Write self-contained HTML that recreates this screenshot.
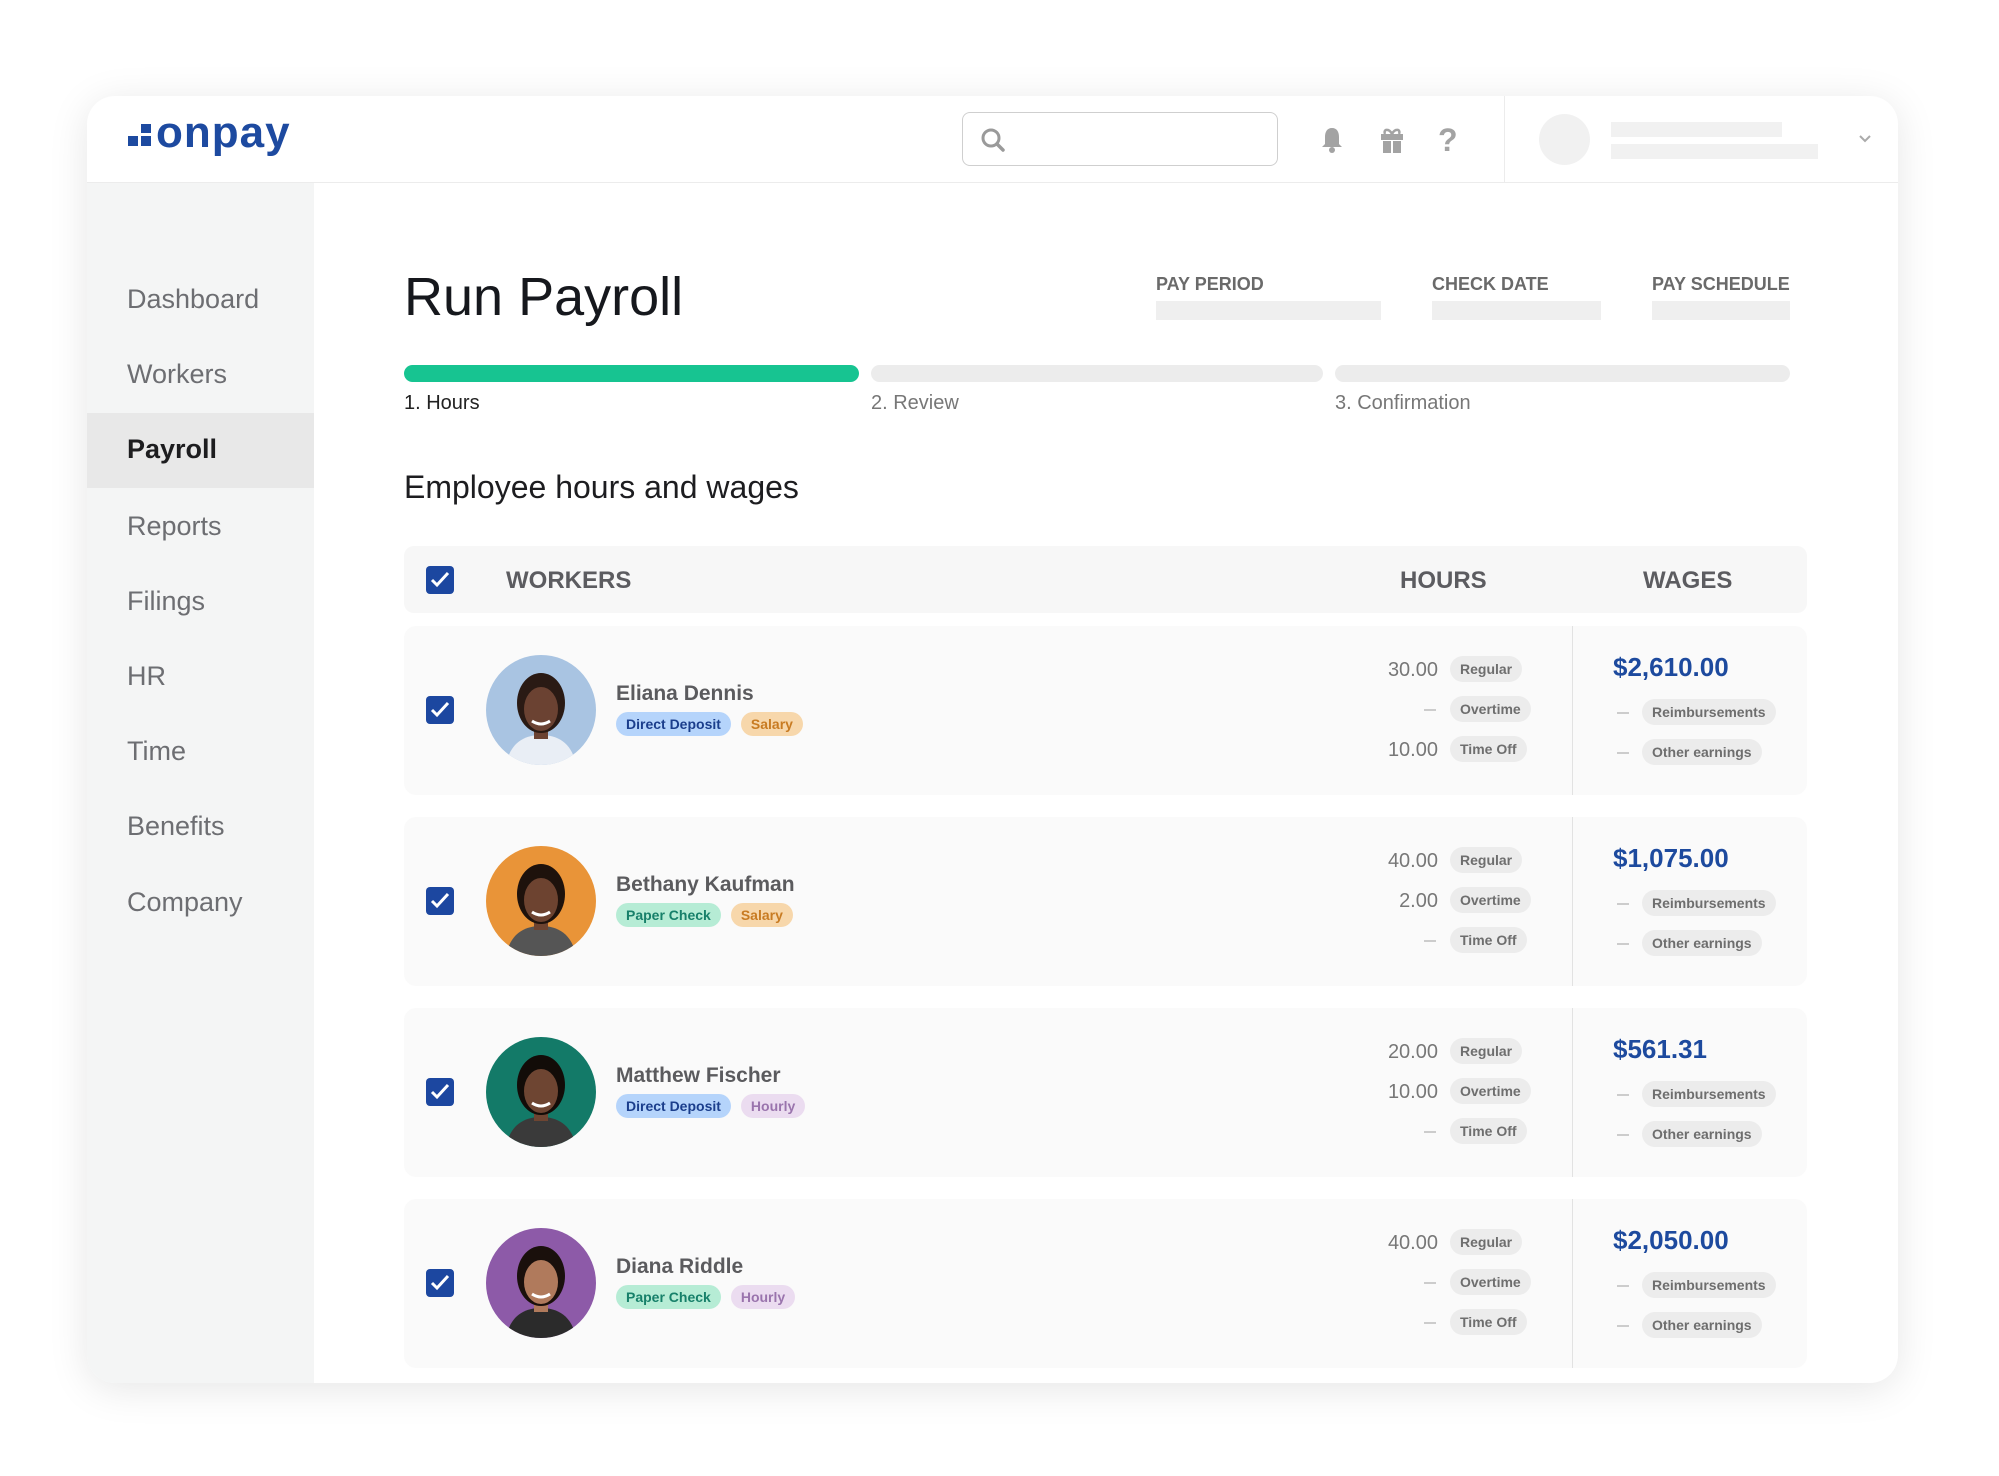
<!DOCTYPE html>
<html><head><meta charset="utf-8"><style>
*{margin:0;padding:0;box-sizing:border-box}
body{width:1999px;height:1476px;background:#fff;font-family:"Liberation Sans",sans-serif;position:relative;overflow:hidden}
.a{position:absolute}
.card{left:87px;top:96px;width:1811px;height:1287px;background:#fff;border-radius:28px;box-shadow:0 6px 40px rgba(0,0,0,.10);overflow:hidden}
.nav{left:127px;font-size:27px;color:#6d6e72}
.lbl{font-size:18px;font-weight:bold;color:#6a6a6a}
.bar{height:19px;background:#efefef}
.prog{top:365px;height:17px;border-radius:9px;background:#ececec}
.row{left:404px;width:1403px;height:169px;background:#fafafa;border-radius:12px}
.cb{width:28px;height:28px;background:#1c47a0;border-radius:4px}
.cb svg{position:absolute;left:4px;top:5px}
.name{font-size:21px;color:#5b5b5e;font-weight:bold}
.badge{height:24px;line-height:24px;padding:0 10px;border-radius:12px;font-size:14px;font-weight:bold;display:inline-block;margin-right:10px}
.dd{background:#b5d4fb;color:#1b3e8c}.pc{background:#b6ecd5;color:#17806a}.sa{background:#f7d7ab;color:#c87b22}.ho{background:#ebdcf0;color:#9a74ad}
.num{font-size:20px;color:#777;text-align:right;width:100px}
.pill{height:26px;line-height:26px;padding:0 10px;border-radius:13px;background:#ececec;font-size:14px;font-weight:bold;color:#6e6e6e}
.dash{width:12px;height:2px;background:#ccc}
.wage{font-size:26px;font-weight:bold;color:#1d4a9e}
.av{width:110px;height:110px;border-radius:50%;overflow:hidden}
</style></head><body>
<div class="a card">
 <div class="a" style="left:0;top:86px;width:1811px;height:1px;background:#ececec"></div>
 <div class="a" style="left:0;top:87px;width:227px;height:1200px;background:#f4f5f5"></div>
 <div class="a" style="left:0;top:317px;width:227px;height:75px;background:#e8e8e8"></div>
 <div class="a" style="left:1417px;top:0;width:1px;height:86px;background:#ececec"></div>
</div>
<!-- logo -->
<div class="a" style="left:128px;top:136px;width:10px;height:10px;background:#1d4aa0"></div>
<div class="a" style="left:141px;top:136px;width:10px;height:10px;background:#1d4aa0"></div>
<div class="a" style="left:141px;top:124px;width:10px;height:9px;background:#1d4aa0"></div>
<div class="a" style="left:156px;top:108px;font-size:44px;font-weight:bold;color:#1d4aa0;letter-spacing:1px">onpay</div>
<!-- search -->
<div class="a" style="left:962px;top:112px;width:316px;height:54px;border:1.5px solid #cfcfcf;border-radius:8px"></div>
<svg class="a" style="left:980px;top:127px" width="26" height="26" viewBox="0 0 26 26"><circle cx="11" cy="11" r="8" fill="none" stroke="#9a9a9a" stroke-width="3"/><line x1="17" y1="17" x2="23" y2="23" stroke="#9a9a9a" stroke-width="3.5" stroke-linecap="round"/></svg>
<svg class="a" style="left:1320px;top:126px" width="24" height="28" viewBox="0 0 24 28"><path d="M12 2c-5 0-7 4-7 9v7l-3 3h20l-3-3v-7c0-5-2-9-7-9z" fill="#a3a3a3"/><circle cx="12" cy="24" r="3" fill="#a3a3a3"/></svg>
<svg class="a" style="left:1379px;top:126px" width="26" height="28" viewBox="0 0 26 28"><rect x="2" y="8" width="22" height="6" fill="#a3a3a3"/><rect x="4" y="15" width="8" height="12" fill="#a3a3a3"/><rect x="14" y="15" width="8" height="12" fill="#a3a3a3"/><path d="M13 8c-3-6-9-5-7 0M13 8c3-6 9-5 7 0" fill="none" stroke="#a3a3a3" stroke-width="2.5"/></svg>
<div class="a" style="left:1438px;top:122px;font-size:32px;font-weight:bold;color:#a3a3a3">?</div>
<div class="a" style="left:1539px;top:114px;width:51px;height:51px;border-radius:50%;background:#f1f1f1"></div>
<div class="a" style="left:1611px;top:122px;width:171px;height:15px;background:#f1f1f1"></div>
<div class="a" style="left:1611px;top:144px;width:207px;height:15px;background:#f1f1f1"></div>
<svg class="a" style="left:1858px;top:134px" width="14" height="10" viewBox="0 0 14 10"><path d="M2 2l5 5 5-5" fill="none" stroke="#aaa" stroke-width="2"/></svg>
<!-- nav -->
<div class="a nav" style="top:284px">Dashboard</div>
<div class="a nav" style="top:359px">Workers</div>
<div class="a nav" style="top:434px;color:#1d1d1f;font-weight:bold">Payroll</div>
<div class="a nav" style="top:511px">Reports</div>
<div class="a nav" style="top:586px">Filings</div>
<div class="a nav" style="top:661px">HR</div>
<div class="a nav" style="top:736px">Time</div>
<div class="a nav" style="top:811px">Benefits</div>
<div class="a nav" style="top:887px">Company</div>
<!-- title -->
<div class="a" style="left:404px;top:266px;font-size:54px;color:#16181d">Run Payroll</div>
<div class="a lbl" style="left:1156px;top:274px">PAY PERIOD</div>
<div class="a bar" style="left:1156px;top:301px;width:225px"></div>
<div class="a lbl" style="left:1432px;top:274px">CHECK DATE</div>
<div class="a bar" style="left:1432px;top:301px;width:169px"></div>
<div class="a lbl" style="left:1652px;top:274px">PAY SCHEDULE</div>
<div class="a bar" style="left:1652px;top:301px;width:138px"></div>
<div class="a prog" style="left:404px;width:455px;background:#17c491"></div>
<div class="a prog" style="left:871px;width:452px"></div>
<div class="a prog" style="left:1335px;width:455px"></div>
<div class="a" style="left:404px;top:392px;font-size:20px;color:#222">1. Hours</div>
<div class="a" style="left:871px;top:392px;font-size:20px;color:#777">2. Review</div>
<div class="a" style="left:1335px;top:392px;font-size:20px;color:#777">3. Confirmation</div>
<div class="a" style="left:404px;top:469px;font-size:32px;color:#1d1d20">Employee hours and wages</div>
<!-- table header -->
<div class="a" style="left:404px;top:546px;width:1403px;height:67px;background:#f7f7f7;border-radius:10px"></div>
<div class="a cb" style="left:426px;top:566px"><svg width="20" height="18" viewBox="0 0 20 18"><path d="M2 9l5 5 11-12" fill="none" stroke="#fff" stroke-width="3"/></svg></div>
<div class="a" style="left:506px;top:567px;font-size:24px;font-weight:bold;color:#5c5c60">WORKERS</div>
<div class="a" style="left:1400px;top:567px;font-size:24px;font-weight:bold;color:#5c5c60">HOURS</div>
<div class="a" style="left:1643px;top:567px;font-size:24px;font-weight:bold;color:#5c5c60">WAGES</div>

<div id="rows"></div>
<script>
var data=[
["Eliana Dennis","dd","Direct Deposit","sa","Salary",["30.00","","10.00"],"$2,610.00","#a9c4e2","#2a1a14","#6b4232","#e9eef5"],
["Bethany Kaufman","pc","Paper Check","sa","Salary",["40.00","2.00",""],"$1,075.00","#e99438","#1e120c","#6d4330","#555"],
["Matthew Fischer","dd","Direct Deposit","ho","Hourly",["20.00","10.00",""],"$561.31","#137a68","#120c08","#6e4532","#3a3a3a"],
["Diana Riddle","pc","Paper Check","ho","Hourly",["40.00","",""],"$2,050.00","#8d5aa8","#1a100c","#b07a5c","#2b2b2b"]];
var h="";
data.forEach(function(d,i){
var t=626+i*191;
h+='<div class="a row" style="top:'+t+'px"></div>';
h+='<div class="a" style="left:1572px;top:'+t+'px;width:1px;height:169px;background:#e2e2e2"></div>';
h+='<div class="a cb" style="left:426px;top:'+(t+70)+'px"><svg width="20" height="18" viewBox="0 0 20 18"><path d="M2 9l5 5 11-12" fill="none" stroke="#fff" stroke-width="3"/></svg></div>';
h+='<div class="a av" style="left:486px;top:'+(t+29)+'px;background:'+d[7]+'"><svg width="110" height="110" viewBox="0 0 110 110"><path d="M20 110c4-22 18-30 35-30s31 8 35 30z" fill="'+d[10]+'"/><rect x="48" y="66" width="14" height="18" fill="'+d[9]+'"/><ellipse cx="55" cy="48" rx="24" ry="30" fill="'+d[8]+'"/><ellipse cx="55" cy="54" rx="17" ry="22" fill="'+d[9]+'"/><path d="M46 66q9 6 18 0" stroke="#fff" stroke-width="3" fill="none"/></svg></div>';
h+='<div class="a name" style="left:616px;top:'+(t+56)+'px">'+d[0]+'</div>';
h+='<div class="a" style="left:616px;top:'+(t+86)+'px;white-space:nowrap"><span class="badge '+d[1]+'">'+d[2]+'</span><span class="badge '+d[3]+'">'+d[4]+'</span></div>';
var lab=["Regular","Overtime","Time Off"];
for(var k=0;k<3;k++){var y=t+43+k*40;
 if(d[5][k]) h+='<div class="a num" style="left:1338px;top:'+(y-10)+'px">'+d[5][k]+'</div>';
 else h+='<div class="a dash" style="left:1424px;top:'+y+'px"></div>';
 h+='<div class="a pill" style="left:1450px;top:'+(y-13)+'px">'+lab[k]+'</div>';}
h+='<div class="a wage" style="left:1613px;top:'+(t+26)+'px">'+d[6]+'</div>';
var sl=["Reimbursements","Other earnings"];
for(var k=0;k<2;k++){var y=t+86+k*40;
 h+='<div class="a dash" style="left:1617px;top:'+y+'px"></div>';
 h+='<div class="a pill" style="left:1642px;top:'+(y-13)+'px">'+sl[k]+'</div>';}
});
document.getElementById("rows").innerHTML=h;
</script>
</body></html>
